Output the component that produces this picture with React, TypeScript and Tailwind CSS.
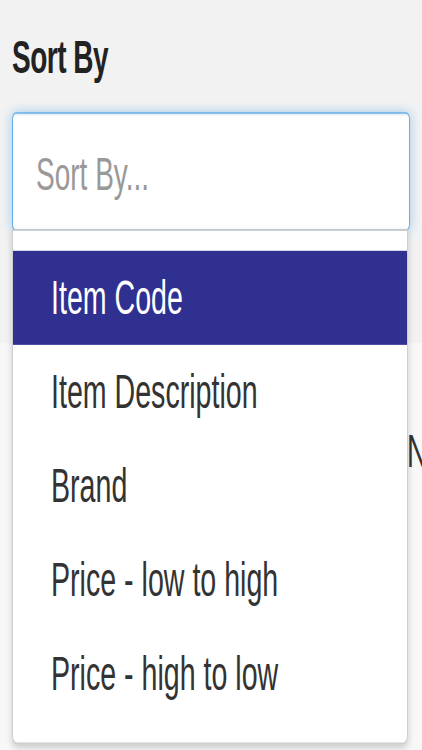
const OPTIONS = [
  'Item Code',
  'Item Description',
  'Brand',
  'Price - low to high',
  'Price - high to low',
]

export default function App() {
  const active = 0

  return (
    <div className="h-[750px] w-full overflow-hidden bg-[#f2f2f2] font-['Liberation_Sans',Arial,sans-serif]">
      {/* the shot is stretched vertically, so the page is laid out flat and scaled */}
      <div className="relative origin-top scale-y-[1.65]">
        <div className="px-[12px] pt-[19px]">
          <label className="block text-[28px] leading-8 font-bold text-[#222] tracking-[-0.5px]">
            Sort By
          </label>

          <div className="mt-[17px] flex h-[72px] items-center rounded-[4px] border border-[#66afe9] bg-white pl-[23px] shadow-[inset_0_1px_1px_rgba(0,0,0,0.075),0_0_8px_rgba(102,175,233,0.6)]">
            <span className="text-[28px] leading-8 text-[#999] pt-[4px]">Sort By...</span>
          </div>
        </div>

        {/* content behind the open menu */}
        <div className="mt-[68px] h-[260px] bg-[#f8f8f8] pt-[50px]">
          <div className="pl-[407px] text-[28px] leading-8 text-[#333] whitespace-nowrap">N</div>
        </div>

        {/* dropdown menu */}
        <ul className="absolute left-[12px] top-[139px] w-[396px] rounded-b-[5px] border border-[#cfcfcf] bg-white pt-[12px] pb-[13px] shadow-[0_2px_6px_rgba(0,0,0,0.18)]">
          {OPTIONS.map((opt, i) => (
            <li
              key={opt}
              className={
                i === active
                  ? 'h-[57px] pl-[38px] text-[28.6px] leading-[57px] bg-[#303091] text-white whitespace-nowrap'
                  : 'h-[57px] pl-[38px] text-[28.6px] leading-[57px] text-[#333] whitespace-nowrap'
              }
            >
              {opt}
            </li>
          ))}
        </ul>
      </div>
    </div>
  )
}
